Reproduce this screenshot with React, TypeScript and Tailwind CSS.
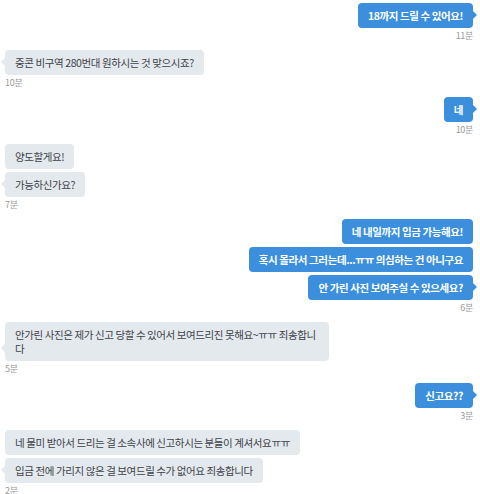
import React from "react";

type Group = {
  side: "me" | "them";
  texts: string[];
  time: string;
};

const groups: Group[] = [
  { side: "me", texts: ["18까지 드릴 수 있어요!"], time: "11분" },
  { side: "them", texts: ["중콘 비구역 280번대 원하시는 것 맞으시죠?"], time: "10분" },
  { side: "me", texts: ["네"], time: "10분" },
  { side: "them", texts: ["양도할게요!", "가능하신가요?"], time: "7분" },
  {
    side: "me",
    texts: [
      "네 내일까지 입금 가능해요!",
      "혹시 몰라서 그러는데...ㅠㅠ 의심하는 건 아니구요",
      "안 가린 사진 보여주실 수 있으세요?",
    ],
    time: "6분",
  },
  {
    side: "them",
    texts: ["안가린 사진은 제가 신고 당할 수 있어서 보여드리진 못해요~ㅠㅠ 죄송합니다"],
    time: "5분",
  },
  { side: "me", texts: ["신고요??"], time: "3분" },
  {
    side: "them",
    texts: [
      "네 물미 받아서 드리는 걸 소속사에 신고하시는 분들이 계셔서요ㅠㅠ",
      "입금 전에 가리지 않은 걸 보여드릴 수가 없어요 죄송합니다",
    ],
    time: "2분",
  },
];

const Bubble = ({ side, text, tail }: { side: "me" | "them"; text: string; tail: boolean }) => {
  if (side === "me") {
    return (
      <div className="relative max-w-[324px] rounded-[4px] bg-[#3b8fdc] px-[10px] py-[5.5px] text-[10.5px] font-bold leading-[14px] tracking-[-0.4px] text-white">
        {text}
        {tail && (
          <span className="absolute bottom-[9px] right-[-4px] h-0 w-0 border-y-[4px] border-l-[4px] border-y-transparent border-l-[#3b8fdc]" />
        )}
      </div>
    );
  }
  return (
    <div className="relative max-w-[324px] rounded-[4px] bg-[#e4e9ee] px-[10px] py-[5.5px] text-[10.5px] leading-[14px] tracking-[-0.4px] text-[#3d4248]">
      {text}
      {tail && (
        <span className="absolute bottom-[9px] left-[-4px] h-0 w-0 border-y-[4px] border-r-[4px] border-y-transparent border-r-[#e4e9ee]" />
      )}
    </div>
  );
};

export default function App() {
  return (
    <div
      className="flex h-[494px] w-[480px] flex-col gap-[8px] overflow-hidden bg-white pl-[5px] pr-[7px] pt-[3px]"
      style={{ fontFamily: '"Noto Sans CJK KR", "Noto Sans", sans-serif' }}
    >
      {groups.map((g, i) => (
        <div key={i} className={g.side === "me" ? "flex flex-col items-end" : "flex flex-col items-start"}>
          <div className={g.side === "me" ? "flex flex-col items-end gap-[3px]" : "flex flex-col items-start gap-[3px]"}>
            {g.texts.map((t, j) => (
              <Bubble key={j} side={g.side} text={t} tail={j === g.texts.length - 1} />
            ))}
          </div>
          <div className="mt-[2px] text-[9px] leading-[12px] tracking-[-0.3px] text-[#9a9a9a]">{g.time}</div>
        </div>
      ))}
    </div>
  );
}
